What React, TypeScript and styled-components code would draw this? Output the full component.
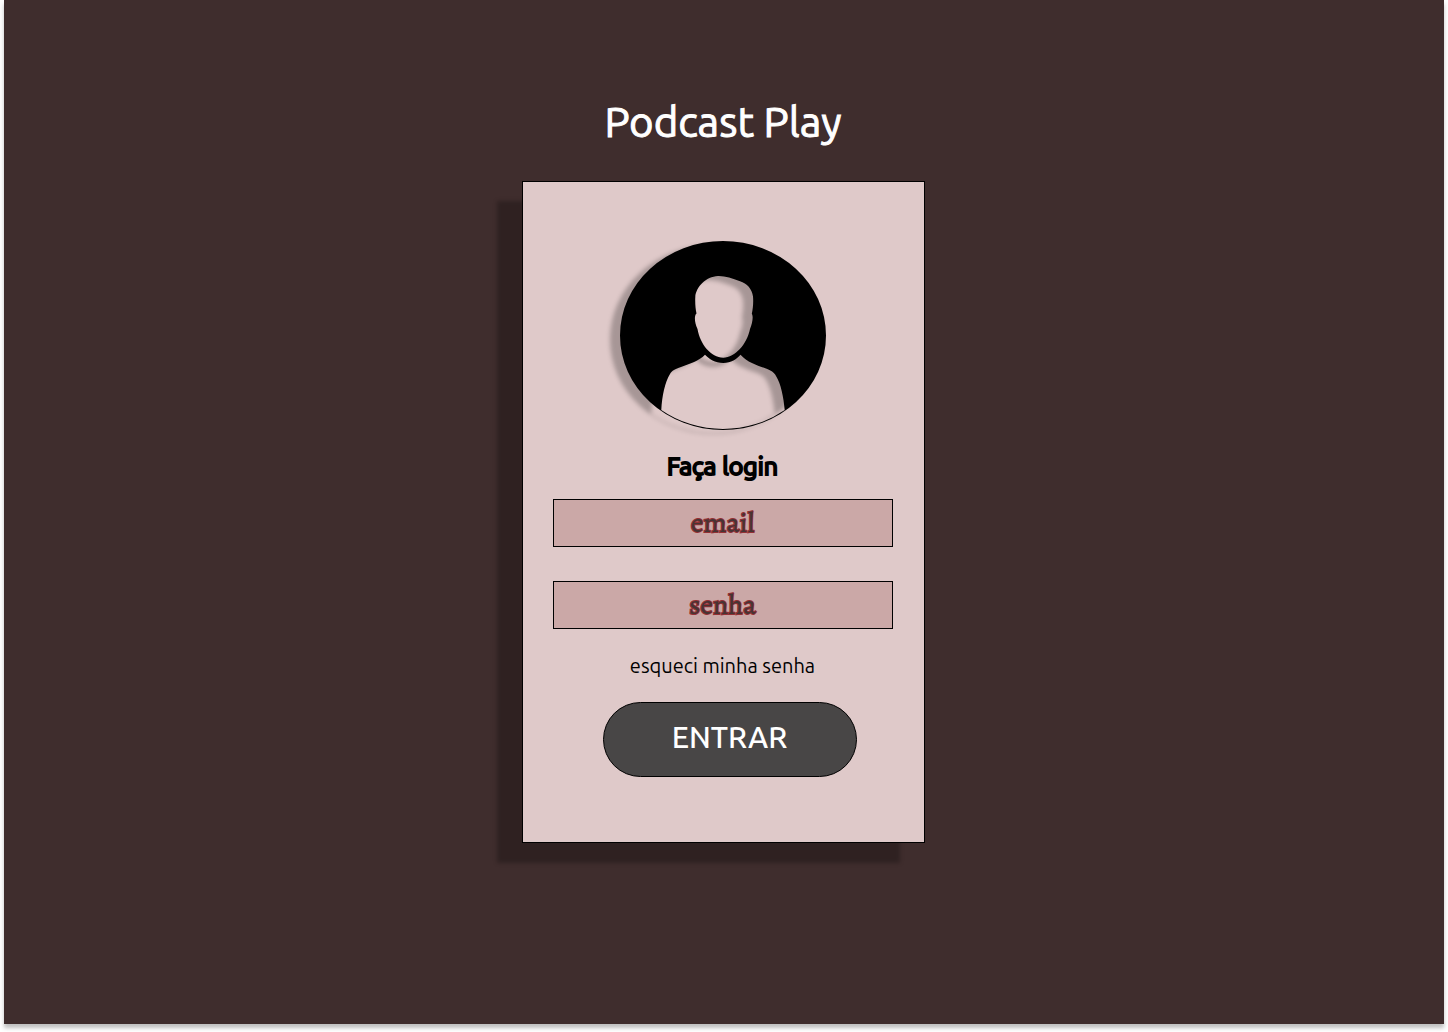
import React, { useState } from "react";
import styled, { createGlobalStyle } from "styled-components";

const GlobalStyle = createGlobalStyle`
  *, *::before, *::after { box-sizing: border-box; }
  body { margin: 0; background: #ffffff; }
`;

const sans = `Ubuntu, "Noto Sans", "Open Sans", sans-serif`;
const serif = `Alegreya, "Liberation Serif", serif`;

const Page = styled.main`
  display: flex;
  flex-direction: column;
  align-items: center;
  gap: 31px;
  min-height: calc(100vh - 8px);
  margin: 0 4px 8px;
  padding: 94px 18px 64px 16px;
  background: #3f2d2d;
  box-shadow: 0 4px 4px rgba(0, 0, 0, 0.25);
  font-family: ${sans};
  font-weight: 400;
`;

const Brand = styled.h1`
  margin: 0;
  font-size: 42px;
  font-weight: inherit;
  line-height: 56px;
  color: #ffffff;
  -webkit-text-stroke: 1px #ffffff;
`;

const Card = styled.form`
  display: flex;
  flex-direction: column;
  align-items: center;
  width: 100%;
  max-width: 403px;
  padding: 58px 31px 65px 30px;
  border: 1px solid #000000;
  background: #dfc9c9;
  box-shadow: -25px 20px 4px rgba(0, 0, 0, 0.25);
`;

const AvatarArt = styled.svg`
  display: block;
  width: 206px;
  height: 190px;
  overflow: visible;
  filter: drop-shadow(-10px 4px 2px rgba(0, 0, 0, 0.25));
`;

const Heading = styled.h2`
  margin: 20px 0 17px;
  font-size: 25px;
  font-weight: inherit;
  line-height: 32px;
  color: #000000;
  -webkit-text-stroke: 2px #000000;
`;

const Fields = styled.div`
  display: flex;
  flex-direction: column;
  gap: 34px;
  width: 100%;
`;

const Field = styled.input`
  width: 100%;
  height: 48px;
  padding: 0 12px;
  border: 1px solid #000000;
  border-radius: 0;
  background: #cba8a7;
  font-family: ${serif};
  font-size: 28px;
  font-weight: 400;
  text-align: center;
  color: #463434;
  -webkit-text-stroke: 2px #943034;
  paint-order: stroke fill;

  &::placeholder {
    color: #463434;
    opacity: 1;
  }
`;

const ForgotLink = styled.a`
  margin: 25px 0 24px;
  font-size: 20px;
  line-height: 24px;
  color: #000000;
  text-decoration: none;

  &:hover { text-decoration: underline; }
`;

const Actions = styled.div`
  width: 100%;
  padding: 0 36px 0 50px;
`;

const SubmitButton = styled.button`
  display: block;
  width: 100%;
  height: 75px;
  padding: 0 16px 6px;
  border: 1px solid #000000;
  border-radius: 38px;
  background: #484646;
  font-family: inherit;
  font-size: 30px;
  font-weight: 500;
  line-height: 40px;
  color: #ffffff;
  cursor: pointer;
`;

// Ellipse with the head and shoulders cut out of it, so the shadow falls inside the cut-outs.
function Avatar() {
  return (
    <AvatarArt viewBox="0 0 206 190" aria-hidden="true">
      <path
        fill="#000000"
        fillRule="evenodd"
        d="M0 95.500A103 94.500 0 0 1 206 95.500A103 94.500 0 0 1 0 95.500Z
           M98 36C86 36.500 76 47 75.300 57C75 63 75.500 69 76.500 73.500C74 75.500 74.500 83 77.500 89
           C80 104 91 117.700 103.300 117.700C115 117.700 127 104 130 89
           C132.500 83 133.500 76 131.800 74C133 68 133.500 62 133 56.500
           C132 49 127 43.500 120 41.300C112 38 105 35.800 98 36Z
           M85 114.700C79 121 70 123.500 61 127C55 129 52 130.500 50 134
           C45 142 42 156 41.300 170A102.300 93.800 0 0 0 164.700 170
           C163.500 157 161 144 156 136C154 132 151 130.500 146 128.500
           C136 125 127 122 120.500 114.700C117 119 111 123 103.300 123C95 123 89 119 85 114.700Z"
      />
    </AvatarArt>
  );
}

export default function App() {
  const [email, setEmail] = useState("");
  const [password, setPassword] = useState("");

  return (
    <>
      <GlobalStyle />
      <Page>
        <Brand>Podcast Play</Brand>
        <Card onSubmit={(event) => event.preventDefault()}>
          <Avatar />
          <Heading>Faça login</Heading>
          <Fields>
            <Field
              type="email"
              aria-label="email"
              placeholder="email"
              autoComplete="email"
              value={email}
              onChange={(event) => setEmail(event.target.value)}
            />
            <Field
              type="password"
              aria-label="senha"
              placeholder="senha"
              autoComplete="current-password"
              value={password}
              onChange={(event) => setPassword(event.target.value)}
            />
          </Fields>
          <ForgotLink href="#recuperar">esqueci minha senha</ForgotLink>
          <Actions>
            <SubmitButton type="submit">ENTRAR</SubmitButton>
          </Actions>
        </Card>
      </Page>
    </>
  );
}
